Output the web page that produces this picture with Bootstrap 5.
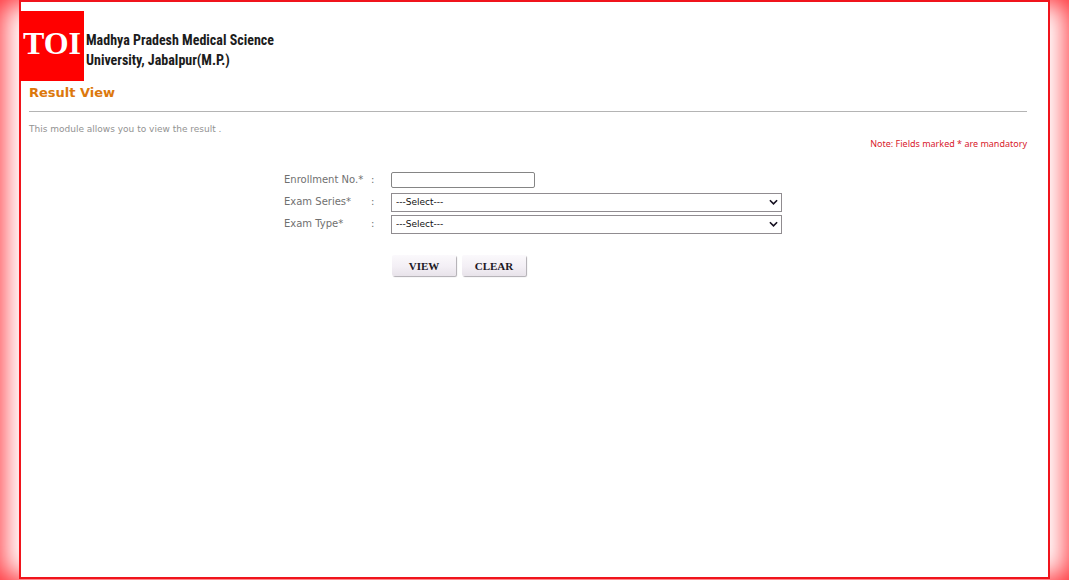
<!DOCTYPE html>
<html lang="en">
<head>
  <meta charset="UTF-8">
  <meta name="viewport" content="width=device-width, initial-scale=1.0">
  <title>Result View</title>
  <link href="https://cdn.jsdelivr.net/npm/bootstrap@5.3.0/dist/css/bootstrap.min.css" rel="stylesheet">
  <style>
    body {
      font-family: "DejaVu Sans", Verdana, sans-serif;
      font-size: 10px;
      line-height: 16px;
      color: #707070;
      padding: 0 19px 1px;
      box-shadow: inset 0 0 28px 2px #ff2028;
    }

    .page-frame {
      background-color: #fff;
      border: 2px solid #f0141c;
      padding: 9px 21px 20px 8px;
    }

    .site-header {
      gap: 2px;
      margin-left: -9px;
    }

    .toi-logo {
      width: 64px;
      height: 70px;
      padding-bottom: 6px;
      background-color: #f00;
      color: #fff;
      font: bold 32px "Liberation Serif", serif;
    }

    .university {
      font: bold 14px/20px "Roboto Condensed", "Liberation Sans", sans-serif;
      color: #1c1c1c;
      padding-top: 8px;
    }

    .result-title {
      font-size: 13px;
      line-height: 16px;
      font-weight: bold;
      color: #dc780c;
      margin: 4px 0 10px;
    }

    .title-rule {
      border-top: 1px solid #b4b4b4;
      opacity: 1;
      margin: 0 0 9px;
    }

    .intro {
      font-size: 9px;
      color: #929292;
    }

    .note {
      font-family: "Noto Sans", sans-serif;
      font-size: 9px;
      line-height: 14px;
      color: #d8202c;
    }

    .result-form {
      max-width: 508px;
      margin: 18px auto 0;
      padding-left: 10px;
    }

    .form-line {
      min-height: 22px;
    }

    .form-line label {
      width: 87px;
    }

    .colon {
      width: 20px;
    }

    .enroll-box {
      width: 144px;
      height: 16px;
      min-height: 0;
      padding: 0 4px;
      border: 1px solid #858585;
      border-radius: 2px;
      font-size: 9px;
    }

    .exam-select {
      height: 19px;
      padding: 0 20px 0 4px;
      border: 1px solid #908c90;
      border-radius: 0;
      font-size: 9px;
      line-height: 16px;
      color: #111;
      background-image: url("data:image/svg+xml,%3csvg xmlns='http://www.w3.org/2000/svg' viewBox='0 0 10 6'%3e%3cpath fill='none' stroke='%23151020' stroke-width='1.8' d='M1 1l4 4 4-4'/%3e%3c/svg%3e");
      background-position: right 3px center;
      background-size: 9px 6px;
    }

    .form-buttons {
      gap: 6px;
      padding: 20px 0 0 108px;
    }

    .form-buttons .btn {
      width: 64px;
      height: 21px;
      padding: 0;
      border: 0;
      border-radius: 2px;
      background: linear-gradient(#fbf9fc, #f3eff5 55%, #e8e3ea);
      box-shadow: 1px 1px 1px #b0acb2;
      font: bold 11px "Liberation Serif", serif;
      color: #1c1824;
    }
  </style>
</head>
<body class="d-flex flex-column min-vh-100">

<main class="page-frame flex-grow-1">
  <header class="site-header d-flex align-items-center">
    <div class="toi-logo d-flex align-items-center justify-content-center flex-shrink-0">TOI</div>
    <div class="university">Madhya Pradesh Medical Science<br>University, Jabalpur(M.P.)</div>
  </header>

  <h1 class="result-title">Result View</h1>
  <hr class="title-rule">
  <p class="intro mb-0">This module allows you to view the result .</p>
  <p class="note text-end mb-0">Note: Fields marked * are mandatory</p>

  <form class="result-form" onsubmit="return false">
    <div class="form-line d-flex align-items-center">
      <label for="enrollment">Enrollment No.*</label>
      <span class="colon">:</span>
      <input type="text" id="enrollment" class="form-control enroll-box">
    </div>
    <div class="form-line d-flex align-items-center">
      <label for="series">Exam Series*</label>
      <span class="colon">:</span>
      <select id="series" class="form-select exam-select flex-fill w-auto">
        <option>---Select---</option>
      </select>
    </div>
    <div class="form-line d-flex align-items-center">
      <label for="type">Exam Type*</label>
      <span class="colon">:</span>
      <select id="type" class="form-select exam-select flex-fill w-auto">
        <option>---Select---</option>
      </select>
    </div>
    <div class="form-buttons d-flex">
      <button type="submit" class="btn">VIEW</button>
      <button type="reset" class="btn">CLEAR</button>
    </div>
  </form>
</main>

<script src="https://cdn.jsdelivr.net/npm/bootstrap@5.3.0/dist/js/bootstrap.bundle.min.js"></script>
</body>
</html>
